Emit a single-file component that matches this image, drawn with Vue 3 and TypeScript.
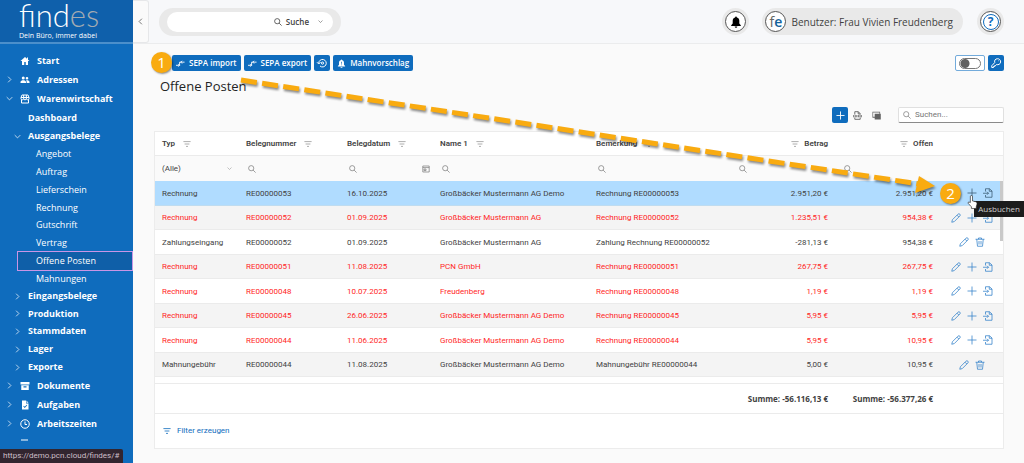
<script setup lang="ts">
import { h } from 'vue'

interface Shape {
  d: string
  fill?: boolean
}

const shapes: Record<string, Shape> = {
  home: { d: 'M10 2 1 10h3v8h4.500v-6h3v6H16v-8h3L16 7.300V3h-2v2.500z', fill: true },
  people: {
    d: 'M6.500 3a3 3 0 1 1 0 6 3 3 0 0 1 0-6zM14 4a2.600 2.600 0 1 1 0 5.200A2.600 2.600 0 0 1 14 4zM1 16v-2c0-2.500 3-3.500 5.500-3.500S12 11.500 12 14v2zM13.300 16v-2c0-1.500-.5-2.500-1.300-3.300 3-.6 7 .3 7 3.300v2z',
    fill: true,
  },
  shop: { d: 'M4 2h12l2 5v2a2.600 2.600 0 0 1-5.300 0 2.700 2.700 0 0 1-5.400 0A2.600 2.600 0 0 1 2 9V7zM2 7h16M7.300 2v7M12.700 2v7M3 11v7h14v-7' },
  archive: { d: 'M1 2h18v5H1zM2.500 8.500h15V18h-15zM7 10.500V13h6v-2.500z', fill: true },
  task: { d: 'M4 1h8v6h5v12H4zM13 1l4 4.500h-4zM6.500 12.500l3 3.500 5-5.500-1.200-1-3.800 4.200-1.700-2z', fill: true },
  clock: { d: 'M10 1.500a8.500 8.500 0 1 1 0 17 8.500 8.500 0 0 1 0-17zM10 5v6h4' },
  dash: { d: 'M2 4h14' },
  right: { d: 'M6 2l8 8-8 8' },
  left: { d: 'M14 2l-8 8 8 8' },
  down: { d: 'M2 6l8 8 8-8' },
  search: { d: 'M8 1.500a6.500 6.500 0 1 1 0 13 6.500 6.500 0 0 1 0-13zM12.800 12.800 19 19' },
  bell: { d: 'M10 1c-1 0-1.500.7-1.500 1.600C5.500 3.200 4.500 5.500 4.500 8v4.500L2 15.500v1h16v-1l-2.500-3V8c0-2.500-1-4.800-4-5.400C11.500 1.700 11 1 10 1zM7.800 17.500h4.400a2.200 2.200 0 0 1-4.400 0z', fill: true },
  bellAlert: {
    d: 'M10 1c-1 0-1.500.7-1.500 1.600C5.500 3.200 4.500 5.500 4.500 8v4.500L2 15.500v1h16v-1l-2.500-3V8c0-2.500-1-4.800-4-5.400C11.500 1.700 11 1 10 1zM9.200 6v4.500h1.600V6zM9.200 12v1.700h1.600V12zM7.800 17.500h4.400a2.200 2.200 0 0 1-4.400 0z',
    fill: true,
  },
  transfer: { d: 'M0 14h7.500M5 11 8 14 5 17M8 14V7h11M13.500 4 10.500 7l3 3' },
  restore: { d: 'M3.500 10.500A7.500 7.500 0 1 1 6 16M0 8.500l3.500 3.500L7 8.500M11 8a2.200 2.200 0 1 1 0 4.400 2.200 2.200 0 0 1 0-4.400' },
  key: { d: 'M12.500 1.500a6 6 0 1 1-1.500 11.500L9.500 15h-2v2H5v2H1.500v-3.500l6-6.500C6 5 9 1.500 12.500 1.500zM14 5.500h1' },
  plus: { d: 'M10 1v18M1 10h18' },
  xlsx: { d: 'M4 8V1.500h8L16 6v2M11.500 2v4.500H16M4 14.500v4h12v-4M1.500 9v5M5 9v5M8.500 9v5M12 9v5M15.500 9v5M18.500 9v5' },
  columns: { d: 'M1 1.500h17V6h1.500v13H6v-4H1zM2.500 3.500V13H6V6h10.500V3.500z', fill: true },
  filter: { d: 'M1 4h18M4 10h12M7.500 16h5' },
  calendar: { d: 'M2 2.500h16v15H2zM2 6.500h16M5 10h5v4H5z' },
  pencil: { d: 'M1.500 18.500l1.300-5L14 2.300a2.500 2.500 0 0 1 3.700 3.700L6.500 17.200zM12 4.300 15.700 8' },
  booking: { d: 'M5 7V1.500h8L18 6v12.500H5V14M12.500 1.500v5H18M0 10.500h11M8 7.500l3 3-3 3' },
  trash: { d: 'M1 4.500h18M7 4.500V2h6v2.500M3.500 4.500 5 18.500h10l1.500-14M8 8v7M12 8v7' },
}

const Icon = (props: { name: string }) => {
  const shape = shapes[props.name]
  return h(
    'svg',
    {
      class: ['icon', shape.fill ? 'icon-solid' : 'icon-line'],
      viewBox: '0 0 20 20',
      'aria-hidden': 'true',
    },
    [h('path', { d: shape.d, 'fill-rule': 'evenodd' })],
  )
}
Icon.props = ['name']

const documents = ['Angebot', 'Auftrag', 'Lieferschein', 'Rechnung', 'Gutschrift', 'Vertrag', 'Offene Posten', 'Mahnungen']
const groups = ['Eingangsbelege', 'Produktion', 'Stammdaten', 'Lager', 'Exporte']
const areas = [
  { label: 'Dokumente', icon: 'archive' },
  { label: 'Aufgaben', icon: 'task' },
  { label: 'Arbeitszeiten', icon: 'clock' },
]

const columns = [
  { label: 'Typ', key: 'typ' },
  { label: 'Belegnummer', key: 'nummer' },
  { label: 'Belegdatum', key: 'datum' },
  { label: 'Name 1', key: 'name' },
  { label: 'Bemerkung', key: 'bemerkung' },
  { label: 'Betrag', key: 'betrag', numeric: true },
  { label: 'Offen', key: 'offen', numeric: true },
]

interface Posten {
  cells: string[]
  overdue?: boolean
  selected?: boolean
  payment?: boolean
}

const rows: Posten[] = [
  { cells: ['Rechnung', 'RE00000053', '16.10.2025', 'Großbäcker Mustermann AG Demo', 'Rechnung RE00000053', '2.951,20 €', '2.951,20 €'], selected: true },
  { cells: ['Rechnung', 'RE00000052', '01.09.2025', 'Großbäcker Mustermann AG', 'Rechnung RE00000052', '1.235,51 €', '954,38 €'], overdue: true },
  { cells: ['Zahlungseingang', 'RE00000052', '01.09.2025', 'Großbäcker Mustermann AG', 'Zahlung Rechnung RE00000052', '-281,13 €', '954,38 €'], payment: true },
  { cells: ['Rechnung', 'RE00000051', '11.08.2025', 'PCN GmbH', 'Rechnung RE00000051', '267,75 €', '267,75 €'], overdue: true },
  { cells: ['Rechnung', 'RE00000048', '10.07.2025', 'Freudenberg', 'Rechnung RE00000048', '1,19 €', '1,19 €'], overdue: true },
  { cells: ['Rechnung', 'RE00000045', '26.06.2025', 'Großbäcker Mustermann AG Demo', 'Rechnung RE00000045', '5,95 €', '5,95 €'], overdue: true },
  { cells: ['Rechnung', 'RE00000044', '11.06.2025', 'Großbäcker Mustermann AG Demo', 'Rechnung RE00000044', '5,95 €', '10,95 €'], overdue: true },
  { cells: ['Mahnungebühr', 'RE00000044', '11.08.2025', 'Großbäcker Mustermann AG Demo', 'Mahnungebühr RE00000044', '5,00 €', '10,95 €'], payment: true },
]
</script>

<template>
  <div class="page">
    <aside class="sidebar">
      <div class="brand">
        <div class="logo">find<span>es</span></div>
        <div class="claim">Dein Büro, immer dabei</div>
      </div>
      <nav class="nav" aria-label="Hauptmenü">
        <ul>
          <li><a href="#" class="item top"><i class="twist"></i><Icon name="home" />Start</a></li>
          <li><a href="#" class="item top"><i class="twist"><Icon name="right" /></i><Icon name="people" />Adressen</a></li>
          <li>
            <a href="#" class="item top"><i class="twist"><Icon name="down" /></i><Icon name="shop" />Warenwirtschaft</a>
            <ul class="sub">
              <li><a href="#" class="item group"><i class="twist"></i>Dashboard</a></li>
              <li>
                <a href="#" class="item group"><i class="twist"><Icon name="down" /></i>Ausgangsbelege</a>
                <ul>
                  <li v-for="entry in documents" :key="entry">
                    <a href="#" class="item leaf" :class="{ current: entry === 'Offene Posten' }">{{ entry }}</a>
                  </li>
                </ul>
              </li>
              <li v-for="entry in groups" :key="entry">
                <a href="#" class="item group"><i class="twist"><Icon name="right" /></i>{{ entry }}</a>
              </li>
            </ul>
          </li>
          <li v-for="area in areas" :key="area.label">
            <a href="#" class="item top"><i class="twist"><Icon name="right" /></i><Icon :name="area.icon" />{{ area.label }}</a>
          </li>
          <li><a href="#" class="item top" aria-label="Weitere"><i class="twist"></i><Icon name="dash" /></a></li>
        </ul>
      </nav>
    </aside>

    <div class="content">
      <header class="topbar">
        <button class="collapse" type="button" aria-label="Menü einklappen"><Icon name="left" /></button>
        <div class="find">
          <div class="find-inner">
            <input type="text" aria-label="Suchbegriff" />
            <button type="button"><Icon name="search" />Suche<Icon name="down" class="caret" /></button>
          </div>
        </div>
        <button class="round" type="button" aria-label="Benachrichtigungen"><span class="disc"><Icon name="bell" /></span></button>
        <button class="user" type="button"><span class="disc fe">f<b>e</b></span>Benutzer: Frau Vivien Freudenberg</button>
        <button class="round help" type="button" aria-label="Hilfe"><span class="disc"><span class="mark">?</span></span></button>
      </header>

      <main class="main">
        <div class="actions">
          <button class="primary" type="button"><Icon name="transfer" />SEPA import</button>
          <button class="primary" type="button"><Icon name="transfer" />SEPA export</button>
          <button class="primary square" type="button" aria-label="Wiederherstellen"><Icon name="restore" /></button>
          <button class="primary" type="button"><Icon name="bellAlert" />Mahnvorschlag</button>
          <label class="switch"><input type="checkbox" aria-label="Ansicht umschalten" /></label>
          <button class="primary square" type="button" aria-label="Einstellungen"><Icon name="key" /></button>
        </div>
        <h1>Offene Posten</h1>

        <div class="tools">
          <button class="primary square" type="button" aria-label="Neu"><Icon name="plus" /></button>
          <button class="plain" type="button" aria-label="Exportieren"><Icon name="xlsx" /></button>
          <button class="plain" type="button" aria-label="Spalten"><Icon name="columns" /></button>
          <label class="lookup"><Icon name="search" /><input type="text" placeholder="Suchen..." aria-label="Suchen" /></label>
        </div>

        <section class="panel">
          <table>
            <colgroup>
              <col class="c-typ" /><col class="c-nummer" /><col class="c-datum" /><col class="c-name" />
              <col class="c-bemerkung" /><col class="c-betrag" /><col class="c-offen" /><col class="c-actions" />
            </colgroup>
            <thead>
              <tr class="heads">
                <th v-for="column in columns" :key="column.key" scope="col" :class="{ num: column.numeric }">
                  <span>{{ column.label }}<Icon name="filter" /></span>
                </th>
                <td></td>
              </tr>
              <tr class="filters">
                <td>
                  <div class="cell">
                    <select aria-label="Typ filtern"><option>(Alle)</option></select>
                    <Icon name="down" class="caret" />
                  </div>
                </td>
                <td v-for="column in columns.slice(1)" :key="column.key">
                  <div class="cell seek">
                    <Icon name="search" />
                    <input type="text" :aria-label="column.label + ' filtern'" />
                    <Icon v-if="column.key === 'datum'" name="calendar" />
                  </div>
                </td>
                <td></td>
              </tr>
            </thead>
            <tbody>
              <tr v-for="(row, r) in rows" :key="r" :class="{ overdue: row.overdue, selected: row.selected }">
                <td v-for="(cell, c) in row.cells" :key="c" :class="{ num: c > 4 }">{{ cell }}</td>
                <td class="ops">
                  <div>
                    <button type="button" aria-label="Bearbeiten"><Icon name="pencil" /></button>
                    <button v-if="row.payment" type="button" aria-label="Löschen"><Icon name="trash" /></button>
                    <template v-else>
                      <button type="button" aria-label="Ausbuchen"><Icon name="plus" /></button>
                      <button type="button" aria-label="Buchen"><Icon name="booking" /></button>
                    </template>
                  </div>
                </td>
              </tr>
            </tbody>
            <tfoot>
              <tr class="spacer"><td colspan="8"></td></tr>
              <tr class="totals">
                <td colspan="6" class="num">Summe: -56.116,13 €</td>
                <td class="num">Summe: -56.377,26 €</td>
                <td></td>
              </tr>
            </tfoot>
          </table>
          <div class="builder"><a href="#"><Icon name="filter" />Filter erzeugen</a></div>
          <div class="scroll"></div>
        </section>
      </main>
    </div>

    <svg class="arrow" viewBox="0 0 1024 463" aria-hidden="true">
      <path class="shaft" d="M241 80 919 184" />
      <path class="head" d="M919 176 935 186 915 193z" />
    </svg>
    <div class="step one">1</div>
    <div class="step two">2</div>
    <div class="tip" role="tooltip">Ausbuchen</div>
    <svg class="pointer" viewBox="0 0 20 26" aria-hidden="true">
      <path d="M6 14V3a2 2 0 0 1 4 0v8l6 1.500q3 .8 2.500 4L17 22v3H8v-3L2 15.500q-1-2.500 1.500-2.500z" />
    </svg>
    <div class="status">https://demo.pcn.cloud/findes/#</div>
  </div>
</template>

<style>
body {
  margin: 0;
  background: #fafafa;
}
</style>

<style scoped>
.page {
  position: relative;
  display: flex;
  min-height: 100vh;
  overflow: hidden;
  font: 9px/12px 'Open Sans', 'Noto Sans', sans-serif;
  color: #424242;
}
button,
input,
select {
  font: inherit;
  color: inherit;
  margin: 0;
  padding: 0;
  border: 0;
  background: none;
  outline: none;
  min-width: 0;
}
.icon {
  width: 8px;
  height: 8px;
  flex: none;
  overflow: visible;
}
.icon-solid {
  fill: currentColor;
}
.icon-line {
  fill: none;
  stroke: currentColor;
  stroke-width: 2;
}

/* Sidebar */
.sidebar {
  width: 133px;
  flex: none;
  height: 100vh;
  overflow: hidden;
  background: #0f6cbd;
  color: #fff;
}
.brand {
  height: 44px;
  box-sizing: border-box;
  padding-left: 19px;
  background: #0f60ab;
  border-bottom: 2px solid #4b8fcb;
}
.logo {
  font-family: Lato, 'Open Sans', sans-serif;
  font-size: 31px;
  line-height: 31px;
  font-weight: 300;
}
.logo span {
  color: #a3abb2;
}
.claim {
  font-size: 7px;
  line-height: 9px;
  white-space: nowrap;
}
.nav {
  padding-top: 7px;
}
.nav ul {
  list-style: none;
  margin: 0;
  padding: 0;
}
.item {
  display: flex;
  align-items: center;
  height: 18px;
  color: #fff;
  text-decoration: none;
  font-size: 9px;
  white-space: nowrap;
}
.item.top,
.item.group {
  font-weight: 700;
}
.item.top {
  height: 19px;
  padding-left: 6px;
}
.item.top > .icon {
  width: 10px;
  height: 10px;
  margin-right: 7px;
}
.twist {
  display: flex;
  width: 14px;
}
.twist .icon {
  width: 7px;
  height: 7px;
}
.nav .sub {
  padding-top: 1px;
}
.item.group {
  padding-left: 14px;
}
.item.leaf {
  position: relative;
  padding-left: 36px;
}
.sub li:nth-child(4n) > .item {
  height: 17px;
}
.item.current {
  z-index: 0;
}
.item.current::before {
  content: '';
  position: absolute;
  z-index: -1;
  inset: -1px 0 -1px 17px;
  border: 1px solid #c995e6;
  background: #0f5fa8;
}

/* Top bar */
.content {
  flex: 1;
  min-width: 0;
}
.topbar {
  display: flex;
  align-items: center;
  height: 43px;
  padding-right: 20px;
  background: #f7f8fa;
  border-bottom: 1px solid #ebeced;
}
.collapse {
  width: 16px;
  height: 43px;
  box-sizing: border-box;
  border: 1px solid #e6e7e9;
  border-left: 0;
  border-radius: 0 3px 3px 0;
  background: #fafafa;
  display: flex;
  align-items: center;
  justify-content: center;
  margin-right: 10px;
}
.collapse .icon {
  width: 7px;
  height: 7px;
}
.find {
  padding: 4px 8px;
  border-radius: 14px;
  background: #e9e9e9;
  margin-right: auto;
}
.find-inner {
  display: flex;
  align-items: center;
  width: 166px;
  height: 20px;
  border-radius: 10px;
  background: #fff;
}
.find-inner input {
  flex: 1;
}
.find-inner button {
  display: flex;
  align-items: center;
  gap: 4px;
  font-size: 8px;
  font-weight: 600;
  padding-right: 10px;
}
.caret {
  width: 5px;
  height: 5px;
}
.find-inner .caret {
  margin-left: 5px;
}
.round {
  width: 27px;
  height: 27px;
  border-radius: 50%;
  background: #e9e9e9;
  display: flex;
  align-items: center;
  justify-content: center;
}
.disc {
  display: flex;
  align-items: center;
  justify-content: center;
  box-sizing: border-box;
  width: 21px;
  height: 21px;
  border: 1px solid #555;
  border-radius: 50%;
  background: #fff;
  color: #000;
}
.disc .icon {
  width: 12px;
  height: 12px;
}
.user {
  display: flex;
  align-items: center;
  height: 27px;
  padding: 0 10px 0 3px;
  margin: 0 14px 0 13px;
  border-radius: 14px;
  background: #e9e9e9;
  font-size: 10px;
  gap: 5px;
}
.fe {
  font-size: 14px;
  color: #666;
}
.fe b {
  font-weight: 600;
  color: #14639c;
}
.mark {
  width: 14px;
  height: 14px;
  border: 1px solid #0f6cbd;
  border-radius: 50%;
  color: #0f6cbd;
  font-size: 12px;
  line-height: 14px;
  font-weight: 700;
}

/* Page body */
.main {
  padding: 11px 20px 0 21px;
}
.actions,
.tools {
  display: flex;
  align-items: center;
  height: 16px;
}
.actions {
  gap: 3px;
  padding-left: 18px;
}
.primary {
  display: flex;
  align-items: center;
  justify-content: center;
  gap: 4px;
  height: 16px;
  padding: 0 4px;
  border-radius: 2px;
  background: #0f6cbd;
  color: #fff;
  font-size: 8px;
  font-weight: 600;
}
.primary .icon {
  width: 9px;
  height: 9px;
}
.actions .square .icon {
  width: 10px;
  height: 10px;
}
.primary.square {
  width: 16px;
  padding: 0;
}
.switch {
  display: flex;
  align-items: center;
  justify-content: center;
  box-sizing: border-box;
  width: 30px;
  height: 16px;
  margin-left: auto;
  border: 1px solid #73abdb;
  border-radius: 2px;
  background: #fff;
}
.switch input {
  appearance: none;
  box-sizing: border-box;
  width: 22px;
  height: 11px;
  border: 1px solid #777;
  border-radius: 6px;
  background: radial-gradient(circle at 5px 50%, #616161 4px, transparent 5px);
}
h1 {
  margin: 7px 0 12px 6px;
  font-size: 13px;
  line-height: 17px;
  font-weight: 400;
  color: #242424;
}
.tools {
  justify-content: flex-end;
}
.plain {
  display: flex;
  justify-content: center;
  width: 19px;
  color: #616161;
}
.plain .icon {
  width: 9px;
  height: 9px;
}
.lookup {
  display: flex;
  align-items: center;
  gap: 4px;
  box-sizing: border-box;
  width: 106px;
  height: 16px;
  margin-left: 12px;
  padding-left: 4px;
  border: 1px solid #e0e0e0;
  border-bottom-color: #8a8a8a;
  border-radius: 2px;
  background: #fff;
  font-family: Roboto, 'Open Sans', sans-serif;
  font-size: 8px;
}
.lookup .icon,
.cell .icon {
  stroke-width: 1.5;
  color: #616161;
}
.lookup input {
  flex: 1;
}
.lookup input::placeholder {
  color: #757575;
  opacity: 1;
}

/* Grid */
.panel {
  position: relative;
  margin-top: 8px;
  border: 1px solid #ececec;
  background: #fff;
}
table {
  width: 100%;
  table-layout: fixed;
  border-collapse: separate;
  border-spacing: 0;
  font-family: Roboto, 'Open Sans', sans-serif;
  font-size: 8px;
}
.c-typ { width: 84px; }
.c-nummer { width: 101px; }
.c-datum { width: 93px; }
.c-name { width: 156px; }
.c-bemerkung { width: 141px; }
.c-betrag { width: 105px; }
.c-offen { width: 105px; }
.c-actions { width: 63px; }
th,
td {
  box-sizing: border-box;
  padding: 0 7px;
  border-bottom: 1px solid #ebebeb;
  text-align: left;
  white-space: nowrap;
}
.heads > * {
  height: 24px;
  font-weight: 600;
}
th span {
  display: flex;
  align-items: center;
  gap: 8px;
}
th .icon {
  color: #999;
}
th.num span {
  flex-direction: row-reverse;
  gap: 5px;
}
.num {
  text-align: right;
}
.filters > * {
  height: 25px;
  background: #fafafa;
  border-bottom: 0;
}
.cell {
  display: flex;
  align-items: center;
}
.cell select,
.cell input {
  flex: 1;
  width: 0;
  appearance: none;
}
.cell.seek {
  padding-left: 2px;
  margin-right: -4px;
}
tbody td {
  height: 25px;
  padding-top: 1px;
}
tbody tr:nth-child(even) td {
  height: 24px;
  background: #f4f4f4;
}
tbody tr.overdue {
  color: #ff1f26;
}
tbody tr.selected td {
  background: #b0dcff;
  border-bottom-color: #bfdcf0;
}
tbody td.ops {
  padding: 0;
}
.ops div {
  display: flex;
  justify-content: center;
  gap: 6px;
}
.ops button {
  display: flex;
  color: #2f7fc8;
}
.ops .icon {
  width: 10px;
  height: 10px;
  stroke-width: 1.5;
}
.selected .ops button {
  color: #35576f;
}
.selected .ops button:first-child {
  visibility: hidden;
}
.spacer td {
  height: 7px;
}
.totals td {
  height: 30px;
  font-family: 'Open Sans', sans-serif;
  font-weight: 700;
}
.builder {
  display: flex;
  align-items: center;
  height: 34px;
  padding-left: 8px;
}
.builder a {
  display: flex;
  align-items: center;
  gap: 6px;
  color: #0f6cbd;
  text-decoration: none;
  font-family: Roboto, 'Open Sans', sans-serif;
  font-size: 8px;
}
.scroll {
  position: absolute;
  top: 49px;
  right: 0;
  width: 3px;
  height: 60px;
  background: #c9c9c9;
}

/* Overlays */
.arrow {
  position: absolute;
  top: 0;
  left: 0;
  width: 1024px;
  height: 463px;
  filter: drop-shadow(1px 2px 1px rgb(0 0 0 / 45%));
  pointer-events: none;
}
.shaft {
  fill: none;
  stroke: #f9ab10;
  stroke-width: 5;
  stroke-dasharray: 16 5.35;
}
.head {
  fill: #f9ab10;
}
.step {
  position: absolute;
  width: 21px;
  height: 21px;
  border-radius: 50%;
  background: #f9ab10;
  box-shadow: 1px 1px 2px rgb(0 0 0 / 45%);
  color: #fff;
  font-size: 15px;
  line-height: 21px;
  text-align: center;
}
.one {
  left: 151px;
  top: 52px;
}
.two {
  left: 940px;
  top: 183px;
}
.tip {
  position: absolute;
  top: 201px;
  right: 0;
  height: 16px;
  padding: 0 4px;
  background: #1c1c1c;
  color: #d0d0d0;
  font-size: 8px;
  line-height: 16px;
}
.pointer {
  position: absolute;
  left: 967px;
  top: 195px;
  width: 11px;
  height: 14px;
  fill: #fff;
  stroke: #222;
  stroke-width: 1.2;
}
.status {
  position: absolute;
  left: 0;
  bottom: 0;
  height: 14px;
  padding: 0 4px 0 3px;
  border-radius: 0 2px 0 0;
  background: #32252f;
  color: #cdbfc8;
  font-family: Roboto, 'Open Sans', sans-serif;
  font-size: 8px;
  line-height: 14px;
}
</style>
